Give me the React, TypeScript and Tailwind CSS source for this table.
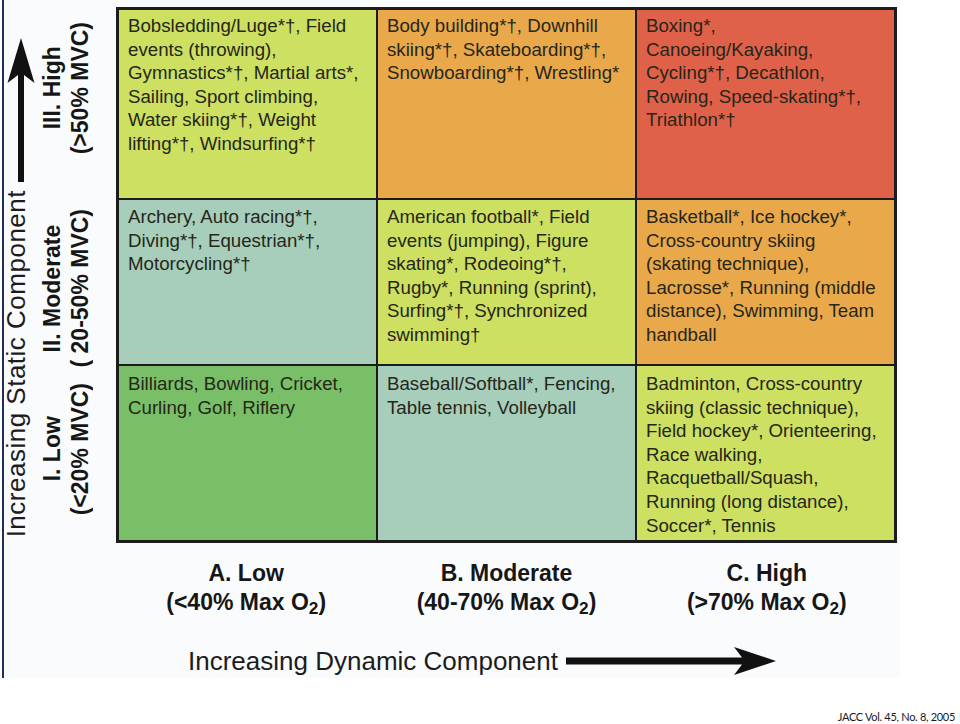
import React from 'react';

type Cell = {
  bg: string;
  pt: string;
  lines: string[];
};

const cells: Cell[] = [
  {
    bg: 'bg-[#cde061]',
    pt: 'pt-[4px]',
    lines: [
      'Bobsledding/Luge*†, Field',
      'events (throwing),',
      'Gymnastics*†, Martial arts*,',
      'Sailing, Sport climbing,',
      'Water skiing*†, Weight',
      'lifting*†, Windsurfing*†',
    ],
  },
  {
    bg: 'bg-[#e9a94b]',
    pt: 'pt-[4px]',
    lines: ['Body building*†, Downhill', 'skiing*†, Skateboarding*†,', 'Snowboarding*†, Wrestling*'],
  },
  {
    bg: 'bg-[#e0614a]',
    pt: 'pt-[4px]',
    lines: ['Boxing*,', 'Canoeing/Kayaking,', 'Cycling*†, Decathlon,', 'Rowing, Speed-skating*†,', 'Triathlon*†'],
  },
  {
    bg: 'bg-[#a6cebb]',
    pt: 'pt-[5px]',
    lines: ['Archery, Auto racing*†,', 'Diving*†, Equestrian*†,', 'Motorcycling*†'],
  },
  {
    bg: 'bg-[#cde061]',
    pt: 'pt-[5px]',
    lines: [
      'American football*, Field',
      'events (jumping), Figure',
      'skating*, Rodeoing*†,',
      'Rugby*, Running (sprint),',
      'Surfing*†, Synchronized',
      'swimming†',
    ],
  },
  {
    bg: 'bg-[#e9a94b]',
    pt: 'pt-[5px]',
    lines: [
      'Basketball*, Ice hockey*,',
      'Cross-country skiing',
      '(skating technique),',
      'Lacrosse*, Running (middle',
      'distance), Swimming, Team',
      'handball',
    ],
  },
  {
    bg: 'bg-[#79bf68]',
    pt: 'pt-[6px]',
    lines: ['Billiards, Bowling, Cricket,', 'Curling, Golf, Riflery'],
  },
  {
    bg: 'bg-[#a6cebb]',
    pt: 'pt-[6px]',
    lines: ['Baseball/Softball*, Fencing,', 'Table tennis, Volleyball'],
  },
  {
    bg: 'bg-[#cde061]',
    pt: 'pt-[6px]',
    lines: [
      'Badminton, Cross-country',
      'skiing (classic technique),',
      'Field hockey*, Orienteering,',
      'Race walking,',
      'Racquetball/Squash,',
      'Running (long distance),',
      'Soccer*, Tennis',
    ],
  },
];

const dynamicLevels = [
  { name: 'A. Low', range: '(<40% Max O' },
  { name: 'B. Moderate', range: '(40-70% Max O' },
  { name: 'C. High', range: '(>70% Max O' },
];

function RowLabel({ height, title, range }: { height: string; title: string; range: string }) {
  return (
    <div className={`flex ${height} flex-col items-start justify-center`}>
      <div className="rotate-180 whitespace-nowrap text-center text-[23px] font-bold leading-[28px] text-[#161616] [writing-mode:vertical-rl]">
        {title}
        <br />
        {range}
      </div>
    </div>
  );
}

export default function App() {
  return (
    <div className="flex h-[724px] w-[960px] flex-col overflow-hidden bg-white [font-family:'Liberation_Sans',Arial,sans-serif]">
      {/* figure */}
      <div className="ml-[2px] flex h-[678px] w-[898px] shrink-0 flex-col border-l-2 border-[#1e2f5c] bg-[#f9fbfd]">
        <div className="flex items-start">
          {/* static axis */}
          <div className="flex w-[112px] shrink-0">
            <div className="flex w-[34px] flex-col pt-[38px]">
              <svg className="ml-[3px] h-[144px] w-[28px]" viewBox="0 0 28 144">
                <path d="M14 0 L27.5 45 L17 37 L17 144 L11 144 L11 37 L0.5 45 Z" fill="#111" />
              </svg>
              <div className="mt-[8px] self-start rotate-180 whitespace-nowrap text-[26px] leading-[25px] tracking-[0.5px] text-[#1c1c1c] [writing-mode:vertical-rl]">
                Increasing Static Component
              </div>
            </div>
            <div className="flex w-[60px] flex-col">
              <RowLabel height="h-[176px]" title="III. High" range="(>50% MVC)" />
              <RowLabel height="h-[224px]" title="II. Moderate" range="( 20-50% MVC)" />
              <RowLabel height="h-[98px]" title="I. Low" range="(<20% MVC)" />
            </div>
          </div>

          {/* matrix */}
          <div className="mt-[7px] grid w-[781px] shrink-0 grid-cols-3 grid-rows-[188px_164px_174px] gap-[2px] border-[3px] border-[#1c1c1c] bg-[#1c1c1c]">
            {cells.map((cell, i) => (
              <div key={i} className={`${cell.bg} ${cell.pt} pl-[9px] text-[18.7px] leading-[23.6px] text-[#262619]`}>
                {cell.lines.map((line) => (
                  <div key={line} className="whitespace-nowrap">
                    {line}
                  </div>
                ))}
              </div>
            ))}
          </div>
        </div>

        {/* dynamic levels */}
        <div className="mt-[16px] pl-[112px]">
          <div className="grid w-[781px] grid-cols-3 text-center text-[23px] font-bold leading-[29px] text-[#161616]">
            {dynamicLevels.map((lvl) => (
              <div key={lvl.name}>
                <div>{lvl.name}</div>
                <div>
                  {lvl.range}
                  <sub>2</sub>)
                </div>
              </div>
            ))}
          </div>
        </div>

        {/* dynamic axis */}
        <div className="mt-[29px] flex items-center gap-[8px] pl-[184px]">
          <span className="whitespace-nowrap text-[26px] leading-[30px] text-[#1c1c1c]">Increasing Dynamic Component</span>
          <svg className="h-[28px] w-[210px]" viewBox="0 0 210 28">
            <path d="M210 14 L168 0 L176 10.5 L0 10.5 L0 17.5 L176 17.5 L168 28 Z" fill="#111" />
          </svg>
        </div>
      </div>

      {/* citation */}
      <div className="flex justify-end pr-[5px] pt-[32px]">
        <span className="whitespace-nowrap text-[11px] leading-[14px] tracking-[-0.3px] text-[#1a1a1a] [font-family:Lato,sans-serif]">
          JACC Vol. 45, No. 8, 2005
        </span>
      </div>
    </div>
  );
}
